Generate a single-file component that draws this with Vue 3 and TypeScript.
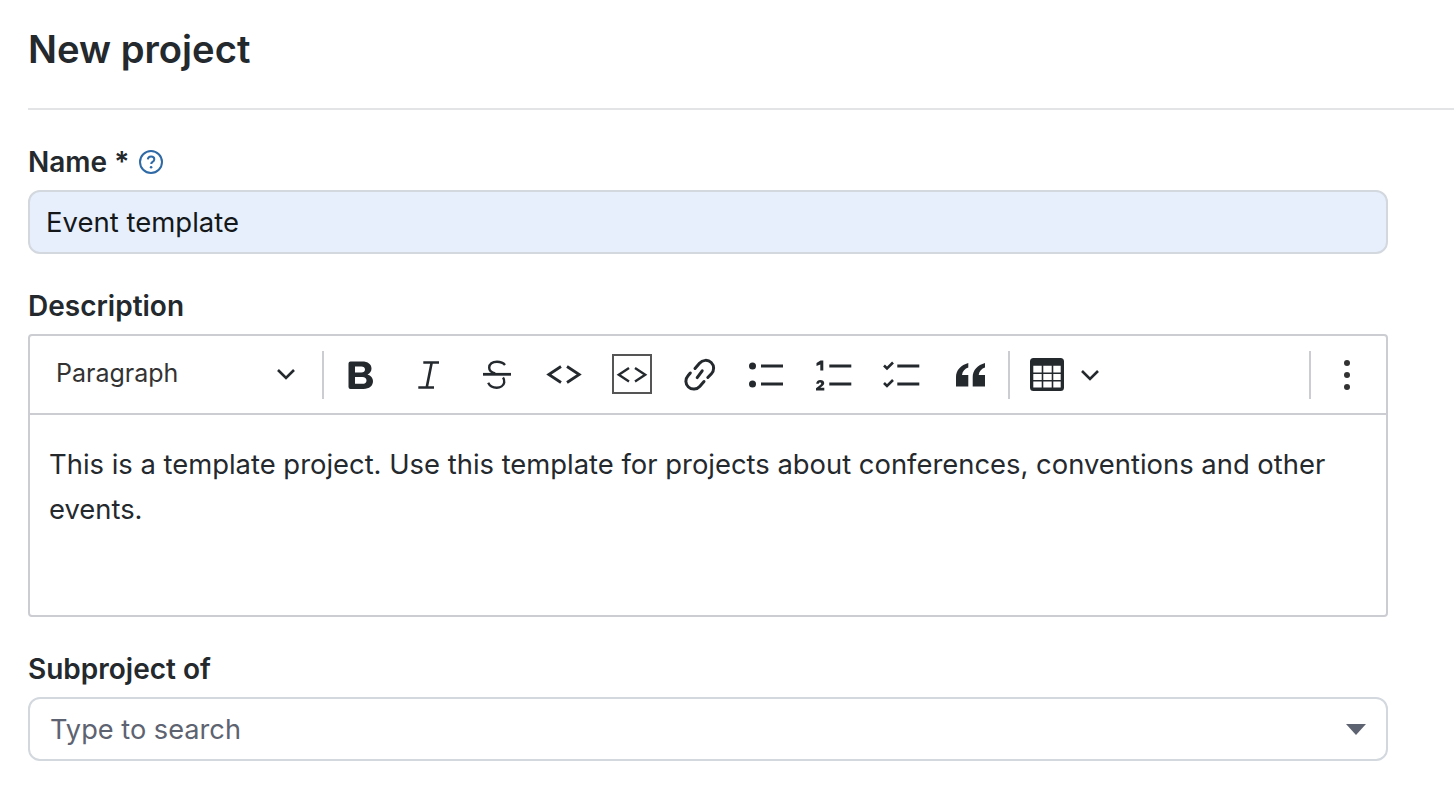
<script setup lang="ts">
const dark = '#24292e'
</script>

<template>
  <main class="page">
    <header class="head"><h1>New project</h1></header>
    <section class="form">
      <div class="field">
        <label class="lab">Name&nbsp;*
          <svg class="help" width="26" height="26" viewBox="0 0 26 26" fill="none">
            <circle cx="13" cy="13" r="11" stroke="#2f6aa6" stroke-width="2"/>
            <path d="M9.800 10.400c.2-1.900 1.500-2.900 3.300-2.900 1.900 0 3.200 1.100 3.200 2.700 0 1.300-.7 2-1.700 2.600-.9.600-1.400 1.100-1.400 2.200" stroke="#2f6aa6" stroke-width="2"/>
            <circle cx="13.100" cy="18.200" r="1.300" fill="#2f6aa6"/>
          </svg>
        </label>
        <div class="input filled">Event template</div>
      </div>

      <div class="field">
        <label class="lab">Description</label>
        <div class="editor">
          <div class="toolbar">
            <div class="para"><span class="para-text">Paragraph</span>
              <svg width="20" height="12" viewBox="0 0 20 12" fill="none"><path d="M2 2l8 8 8-8" :stroke="dark" stroke-width="2.600"/></svg>
            </div>
            <i class="sep"></i>
            <button class="tb first">
              <svg width="40" height="40" viewBox="0 0 40 40"><path fill-rule="evenodd" :fill="dark" d="M9.500 6.500H21c6 0 9.500 2.700 9.500 7 0 2.800-1.500 4.900-4 5.900 3.400.9 5.500 3.400 5.500 6.700 0 4.900-3.600 7.900-9.500 7.900H9.500a2 2 0 0 1-2-2V8.500a2 2 0 0 1 2-2zm4.500 5v6h6.300c2.300 0 3.700-1.100 3.700-3 0-1.900-1.400-3-3.700-3H14zm0 10.500v6.800h7.300c2.700 0 4.200-1.300 4.200-3.400 0-2.100-1.500-3.400-4.200-3.400H14z"/></svg>
            </button>
            <button class="tb">
              <svg width="40" height="40" viewBox="0 0 40 40" fill="none" :stroke="dark" stroke-width="2.600"><path d="M14.300 7.500H30M9.300 32.500H25M22.700 7.500L17.700 32.500"/></svg>
            </button>
            <button class="tb">
              <svg width="40" height="40" viewBox="0 0 40 40" fill="none" :stroke="dark" stroke-width="2.400"><path d="M6 19.300h28" stroke-width="2.800"/><path d="M28 10c-1.800-2.300-5-3.300-8-3.300-4.600 0-7.800 2.300-7.800 6 0 2.400 2.200 4.700 6 5.600"/><path d="M26 22.500c1 1.300 1.400 3 1.200 5-.5 3.300-4 5.200-7.500 5.200-3.600 0-6.800-1.400-8.500-5"/></svg>
            </button>
            <button class="tb">
              <svg width="40" height="40" viewBox="0 0 40 40" fill="none" :stroke="dark" stroke-width="2.800"><path d="M16 11.500L3.800 19.500 16 27.500M22 11.500l12.200 8-12.200 8"/></svg>
            </button>
            <button class="tb">
              <svg width="40" height="40" viewBox="0 0 40 40" fill="none"><rect x="0" y="0" width="38" height="38" stroke="#555" stroke-width="2"/><path d="M16 13L5.800 19.800 16 26.500M22 13l10.200 6.800L22 26.500" :stroke="dark" stroke-width="2.400"/></svg>
            </button>
            <button class="tb">
              <svg width="40" height="40" viewBox="0 0 40 40" fill="none" :stroke="dark" stroke-width="3" stroke-linecap="round"><path d="M14 13.500l4.500-5.300c3-3.500 8.500-3.800 11.700-.7 3.200 3.200 3.200 8 .2 11.300l-3.600 3.700"/><path d="M9.300 18l-2.300 2.800c-3 3.400-2.800 8.200.4 11.200 3.200 3 8.400 2.800 11.300-.5l4.300-5"/><path d="M16.200 22.600l5-6.800"/></svg>
            </button>
            <button class="tb">
              <svg width="40" height="40" viewBox="0 0 40 40" :fill="dark"><circle cx="3.500" cy="11" r="3.500"/><circle cx="3.500" cy="29" r="3.500"/><rect x="12" y="9.500" width="22" height="3"/><rect x="12" y="27.500" width="22" height="3"/></svg>
            </button>
            <button class="tb">
              <svg width="40" height="40" viewBox="0 0 40 40" :fill="dark"><path d="M-.5 8l4-2.500h2.800v10h-3V9.500L-.5 11z"/><path d="M-1 35.500v-2.300l4.200-3.300c.8-.7 1-1.100 1-1.600 0-.6-.4-.9-1-.9-.8 0-1.300.5-1.400 1.400h-2.600C-.7 26.400.9 25 3.300 25c2.400 0 3.900 1.200 3.900 3.100 0 1.300-.7 2.200-2 3.200l-1.900 1.500h4v2.700z"/><rect x="12.300" y="9.500" width="22" height="3"/><rect x="12.300" y="27.500" width="22" height="3"/></svg>
            </button>
            <button class="tb">
              <svg width="40" height="40" viewBox="0 0 40 40" fill="none" :stroke="dark"><path d="M-1 10.500l3 3 6-6M-1 28l3 3 6-6" stroke-width="2.600"/><path d="M12.300 11h22M12.300 29h22" stroke-width="3"/></svg>
            </button>
            <button class="tb">
              <svg width="40" height="40" viewBox="0 0 40 40" :fill="dark"><path d="M15.300 8C8 10 3 15 3 22v9.500h12.300V20H9c.5-4 3-6.500 6.300-7.500z"/><path d="M32 8c-7.300 2-12.300 7-12.300 14v9.500H32V20h-6.300c.5-4 3-6.500 6.300-7.500z"/></svg>
            </button>
            <i class="sep s2"></i>
            <div class="tbl">
              <svg width="34" height="33" viewBox="0 0 34 33"><path fill-rule="evenodd" :fill="dark" d="M3.500 0h27A3.500 3.500 0 0 1 34 3.500v26a3.500 3.500 0 0 1-3.500 3.500h-27A3.500 3.500 0 0 1 0 29.500v-26A3.500 3.500 0 0 1 3.500 0zM3.300 7.700v6.700h8.400V7.700zm10 0v6.700h8.400V7.700zm10 0v6.700h7.400V7.700zM3.300 16v6h8.400v-6zm10 0v6h8.400v-6zm10 0v6h7.400v-6zM3.300 23.400v6h8.400v-6zm10 0v6h8.400v-6zm10 0v6h7.400v-6z"/></svg>
              <svg width="20" height="12" viewBox="0 0 20 12" fill="none"><path d="M2 2l8 8 8-8" :stroke="dark" stroke-width="2.600"/></svg>
            </div>
            <span class="grow"></span>
            <i class="sep"></i>
            <button class="tb last">
              <svg width="12" height="32" viewBox="0 0 12 32" fill="#333"><circle cx="6" cy="4" r="3"/><circle cx="6" cy="16" r="3"/><circle cx="6" cy="28" r="3"/></svg>
            </button>
          </div>
          <div class="content">This is a template project. Use this template for projects about conferences, conventions and other events.</div>
        </div>
      </div>

      <div class="field">
        <label class="lab">Subproject of</label>
        <div class="input select"><span>Type to search</span><i class="caret"></i></div>
      </div>
    </section>
  </main>
</template>

<style scoped>
.page { font-family: Inter, "Liberation Sans", sans-serif; color: #24292e; height: 810px; overflow: hidden; }
.head { margin-left: 28px; height: 110px; box-sizing: border-box; border-bottom: 2px solid #e2e4e6; padding-top: 26px; }
h1 { margin: 0; font-size: 38.200px; line-height: 46px; font-weight: 600; }
.form { width: 1360px; margin-left: 28px; }
.field { display: flex; flex-direction: column; margin-top: 36px; }
.lab { display: flex; align-items: center; height: 32px; margin: 0 0 12px; font-size: 28px; font-weight: 600; line-height: 32px; }
.help { margin-left: 9px; }
.input { height: 64px; box-sizing: border-box; border: 2px solid #d3d8df; border-radius: 12px; display: flex; align-items: center; font-size: 27.200px; }
.filled { background: #e7effc; padding-left: 16px; color: #15181b; font-size: 27.500px; }
.select { padding: 0 20px 0 20px; justify-content: space-between; color: #5d6370; }
.caret { width: 0; height: 0; border-left: 10px solid transparent; border-right: 10px solid transparent; border-top: 11px solid #5d6370; }
.editor { box-sizing: border-box; height: 283px; border: 2px solid #cccdd2; border-radius: 4px; }
.toolbar { height: 77px; padding-right: 5px; border-bottom: 2px solid #cccdd2; display: flex; align-items: center; }
.para { width: 292px; height: 50px; box-sizing: border-box; padding: 0 26px; display: flex; align-items: center; justify-content: space-between; font-size: 25px; color: #333; }
.para-text { margin-bottom: 3px; }
.para svg { margin-bottom: 1px; }
.sep { width: 2px; height: 48px; background: #cccdd2; flex: none; }
.s2 { margin-left: 1px; }
.tb { width: 68px; height: 50px; padding: 0; margin: 0; border: 0; background: none; display: flex; align-items: center; justify-content: center; flex: none; }
.tb svg { overflow: visible; }
.first { margin-left: 3px; }
.last { margin-left: 2px; }
.tbl { display: flex; align-items: center; margin-left: 20px; gap: 16px; }
.grow { flex: 1; }
.content { padding: 27px 19px 0; font-size: 27.400px; line-height: 45px; color: #24292e; }
</style>
